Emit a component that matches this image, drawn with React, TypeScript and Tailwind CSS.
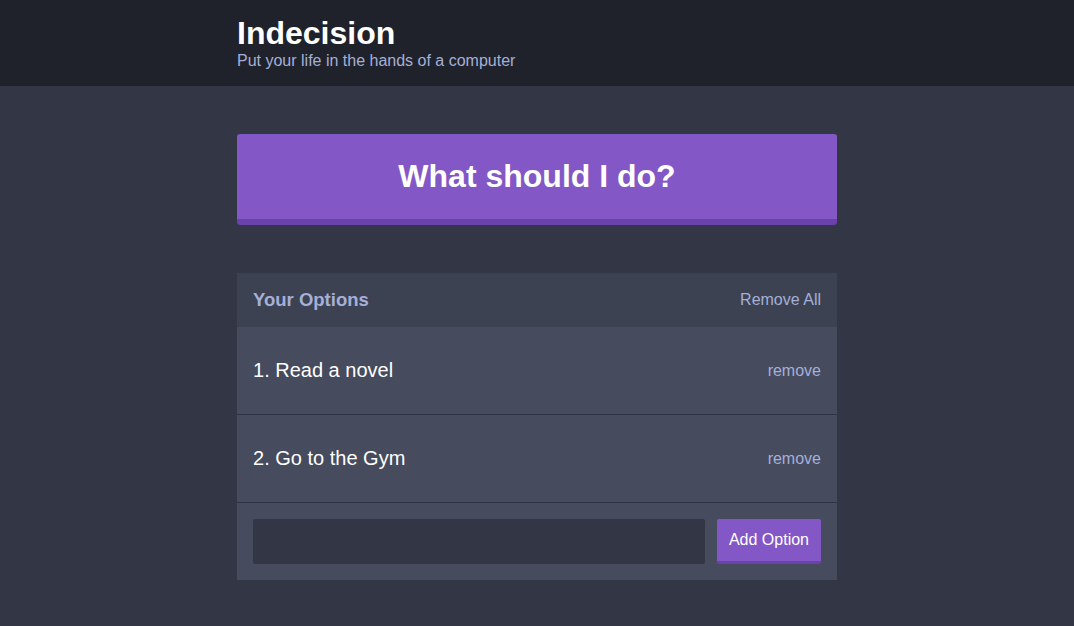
import React from "react";

export default function App() {
  const options = ["Read a novel", "Go to the Gym"];
  return (
    <div
      className="min-h-screen bg-[#333745] text-white"
      style={{ fontFamily: '"Liberation Sans", Arial, Helvetica, sans-serif' }}
    >
      <header className="bg-[#20222b] py-4">
        <div className="w-[600px] mx-auto">
          <h1 className="text-[32px] leading-[34px] mb-[2px] font-bold text-white">Indecision</h1>
          <h2 className="text-[16px] leading-[18px] font-normal text-[#a5afd7]">
            Put your life in the hands of a computer
          </h2>
        </div>
      </header>
      <div className="w-[600px] mx-auto">
        <button className="mt-12 mb-12 w-full bg-[#8357c5] border-b-[6px] border-[#6b41ac] rounded-[3px] py-6 text-[32px] leading-[37px] font-bold text-white">
          What should I do?
        </button>
        <div className="bg-[#464b5e]">
          <div className="bg-[#3c4251] flex items-center justify-between p-4 h-[54px]">
            <h3 className="text-[18.5px] font-bold text-[#a5afd7]">Your Options</h3>
            <button className="text-[16px] text-[#a5afd7]">Remove All</button>
          </div>
          {options.map((o, i) => (
            <div
              key={o}
              className="flex items-center justify-between p-4 border-b border-[#2f3347]"
            >
              <p className="my-4 text-[20px] leading-[23px] text-white">
                {i + 1}. {o}
              </p>
              <button className="text-[16px] text-[#a5afd7]">remove</button>
            </div>
          ))}
          <form className="flex p-4" onSubmit={(e) => e.preventDefault()}>
            <input
              className="flex-1 mr-3 h-[45px] bg-[#333745] rounded-[2px] px-2 text-[#a5afd7] outline-none"
              type="text"
            />
            <button className="h-[45px] bg-[#8357c5] border-b-[3px] border-[#6b41ac] rounded-[2px] px-3 text-[16px] text-white">
              Add Option
            </button>
          </form>
        </div>
      </div>
    </div>
  );
}
